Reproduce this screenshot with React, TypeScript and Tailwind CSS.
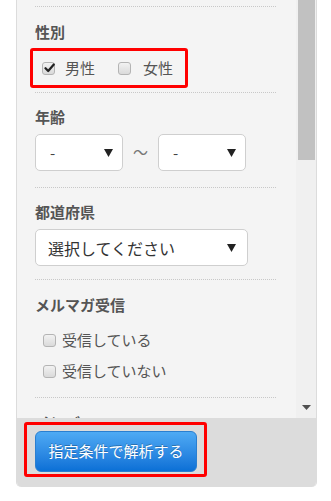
import React from "react";

const font = { fontFamily: '"Noto Sans CJK JP", "Noto Sans", sans-serif' };

const Separator = () => (
  <div className="h-0 border-t border-dotted border-[#c8c8c8]" />
);

const Label = ({ children, className = "" }: { children: React.ReactNode; className?: string }) => (
  <div className={`text-[15px] font-bold leading-[20px] text-[#555] ${className}`}>{children}</div>
);

const Checkbox = ({ checked = false }: { checked?: boolean }) => (
  <span className="relative flex h-[13px] w-[13px] shrink-0 items-center justify-center rounded-[3px] border border-[#b4b4b4] bg-gradient-to-b from-[#f2f2f2] to-[#dadada]">
    {checked && (
      <svg width="11" height="10" viewBox="0 0 11 10" className="absolute left-[1px] top-[0px]">
        <path d="M1.5 5.2 L4.2 8 L9.8 1.5" fill="none" stroke="#222" strokeWidth="2.2" strokeLinecap="round" strokeLinejoin="round" />
      </svg>
    )}
  </span>
);

const Arrow = () => (
  <svg width="9" height="8" viewBox="0 0 9 8">
    <path d="M0 0 H9 L4.5 8 Z" fill="#222" />
  </svg>
);

const Select = ({ value, className = "" }: { value: string; className?: string }) => (
  <div className={`flex h-[37px] items-center justify-between rounded-[5px] border border-[#cfcfcf] bg-white ${className}`}>
    <span className="leading-none">{value}</span>
    <Arrow />
  </div>
);

export default function App() {
  return (
    <div className="h-[501px] w-[331px] bg-white" style={font}>
      <div className="ml-[16px] flex h-[487px] w-[301px] flex-col overflow-hidden rounded-b-[5px] border-x border-[#dcdcdc]">
        {/* scroll area */}
        <div className="flex h-[418px] bg-[#f4f4f4]">
          <div className="flex-1 overflow-hidden pl-[18px] pr-[20px] pt-[6px]">
            <Separator />
            <Label className="mt-[15px]">性別</Label>
            <div className="ml-[-5px] mt-[6px] flex h-[40px] w-[158px] items-center rounded-[3px] border-[3px] border-[#ff0000] pl-[9px]">
              <Checkbox checked />
              <span className="ml-[10px] text-[15px] text-[#555]">男性</span>
              <span className="ml-[23px]">
                <Checkbox />
              </span>
              <span className="ml-[12px] text-[15px] text-[#555]">女性</span>
            </div>
            <div className="mt-[4px]">
              <Separator />
            </div>
            <Label className="mt-[14px]">年齢</Label>
            <div className="mt-[7px] flex items-center">
              <Select value="-" className="w-[88px] pl-[14px] pr-[9px] text-[15px] text-[#444]" />
              <span className="w-[35px] text-center text-[15px] text-[#777]">〜</span>
              <Select value="-" className="w-[88px] pl-[14px] pr-[9px] text-[15px] text-[#444]" />
            </div>
            <div className="mt-[16px]">
              <Separator />
            </div>
            <Label className="mt-[14px]">都道府県</Label>
            <Select value="選択してください" className="mt-[7px] w-[213px] pl-[12px] pr-[11px] text-[16px] text-[#333]" />
            <div className="mt-[13px]">
              <Separator />
            </div>
            <Label className="mt-[15px]">メルマガ受信</Label>
            <div className="mt-[14px] flex flex-col gap-[9px] pl-[8px]">
              <div className="flex h-[22px] items-center">
                <Checkbox />
                <span className="ml-[6px] text-[15px] text-[#555]">受信している</span>
              </div>
              <div className="flex h-[22px] items-center">
                <Checkbox />
                <span className="ml-[6px] text-[15px] text-[#555]">受信していない</span>
              </div>
            </div>
            <div className="mt-[15px]">
              <Separator />
            </div>
            <Label className="mt-[14px]">メンバー</Label>
          </div>
          {/* scrollbar */}
          <div className="flex w-[20px] flex-col items-center justify-between bg-[#f0f0f0] pb-[8px]">
            <div className="ml-[1px] h-[160px] w-[17px] bg-[#c1c1c1]" />
            <svg width="9" height="5" viewBox="0 0 9 5">
              <path d="M0 0 H9 L4.5 5 Z" fill="#505050" />
            </svg>
          </div>
        </div>
        {/* footer */}
        <div className="flex-1 bg-[#dcdcdc] pl-[7px] pt-[4px]">
          <div className="inline-flex rounded-[3px] border-[3px] border-[#ff0000] pb-[2px] pl-[8px] pr-[7px] pt-[6px]">
            <button className="flex h-[41px] w-[162px] items-center justify-center rounded-[6px] border border-[#2a7fd0] bg-gradient-to-b from-[#4eaaf4] to-[#0a70d6] text-[15px] text-white [text-shadow:0_-1px_0_rgba(0,0,0,0.25)]">
              指定条件で解析する
            </button>
          </div>
        </div>
      </div>
    </div>
  );
}
